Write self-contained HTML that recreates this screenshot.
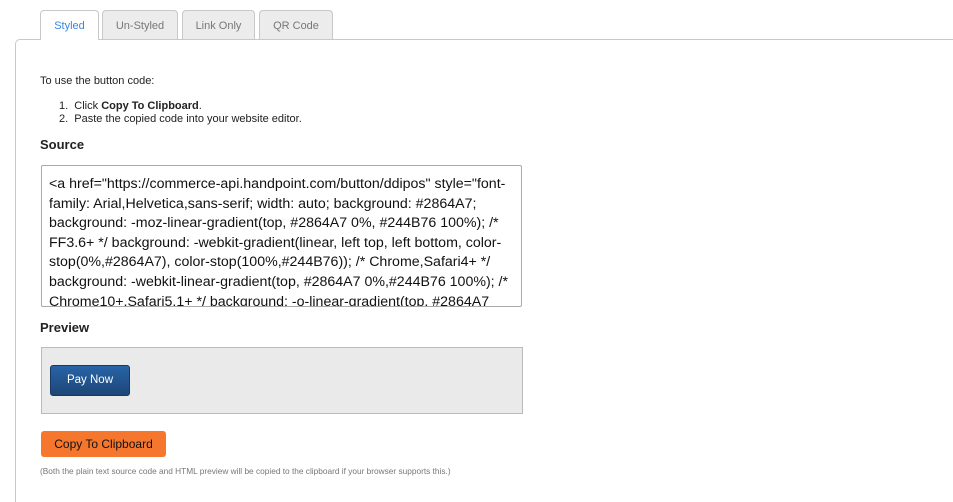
<!DOCTYPE html>
<html><head><style>
html,body{margin:0;overflow:hidden}
body{background:#fff;font-family:"Liberation Sans",Arial,sans-serif;width:953px;height:502px;position:relative;color:#222}
.tab{position:absolute;top:10px;height:29px;border:1px solid #c8c8c8;border-bottom:none;border-radius:4px 4px 0 0;background:#ececec;color:#777;font-size:11px;text-align:center;line-height:30px;box-sizing:border-box}
.panel{position:absolute;left:15px;top:39px;width:938px;height:463px;border:1px solid #c8c8c8;border-right:none;border-bottom:none;border-radius:5px 0 0 0;box-sizing:border-box}
.a{position:absolute;font-size:11px}
h3{position:absolute;margin:0;font-size:13px;font-weight:bold;color:#222}
.ta{position:absolute;left:41px;top:165px;width:481px;height:142px;border:1px solid #aaa;border-radius:2px;box-sizing:border-box;padding:9px 4px 0 7px;font-size:14.2px;line-height:19.6px;overflow:hidden;color:#111;background:#fff}
</style></head><body>
<div class="panel"></div>
<div class="tab" style="left:40px;width:59px;background:#fff;color:#3a86e0;height:30px;z-index:2">Styled</div>
<div class="tab" style="left:102px;width:76px">Un-Styled</div>
<div class="tab" style="left:182px;width:73px">Link Only</div>
<div class="tab" style="left:259px;width:74px">QR Code</div>
<div class="a" style="left:40px;top:75px">To use the button code:</div>
<div class="a" style="left:59px;top:100px;line-height:12.5px">1.&nbsp; Click <b>Copy To Clipboard</b>.<br>2.&nbsp; Paste the copied code into your website editor.</div>
<h3 style="left:40px;top:137px">Source</h3>
<div class="ta">&lt;a href="https://commerce-api.handpoint.com/button/ddipos" style="font-family: Arial,Helvetica,sans-serif; width: auto; background: #2864A7; background: -moz-linear-gradient(top, #2864A7 0%, #244B76 100%); /* FF3.6+ */ background: -webkit-gradient(linear, left top, left bottom, color-stop(0%,#2864A7), color-stop(100%,#244B76)); /* Chrome,Safari4+ */ background: -webkit-linear-gradient(top, #2864A7 0%,#244B76 100%); /* Chrome10+,Safari5.1+ */ background: -o-linear-gradient(top, #2864A7 0%,#244B76 100%); /* Opera 11.10+ */ background: -ms-linear</div>
<h3 style="left:40px;top:320px">Preview</h3>
<div style="position:absolute;left:41px;top:347px;width:482px;height:67px;background:#eaeaea;border:1px solid #bbb;box-sizing:border-box"></div>
<div style="position:absolute;left:50px;top:365px;width:80px;height:31px;border-radius:3px;background:linear-gradient(#2864a7,#1d4777);border:1px solid #163a63;box-sizing:border-box;color:#fff;font-size:11.5px;text-align:center;line-height:29px">Pay Now</div>
<div style="position:absolute;left:41px;top:431px;width:125px;height:26px;border-radius:3px;background:#f5772e;color:#111;font-size:12px;text-align:center;line-height:26px">Copy To Clipboard</div>
<div style="position:absolute;left:40px;top:466px;font-size:8.3px;color:#777">(Both the plain text source code and HTML preview will be copied to the clipboard if your browser supports this.)</div>
</body></html>
